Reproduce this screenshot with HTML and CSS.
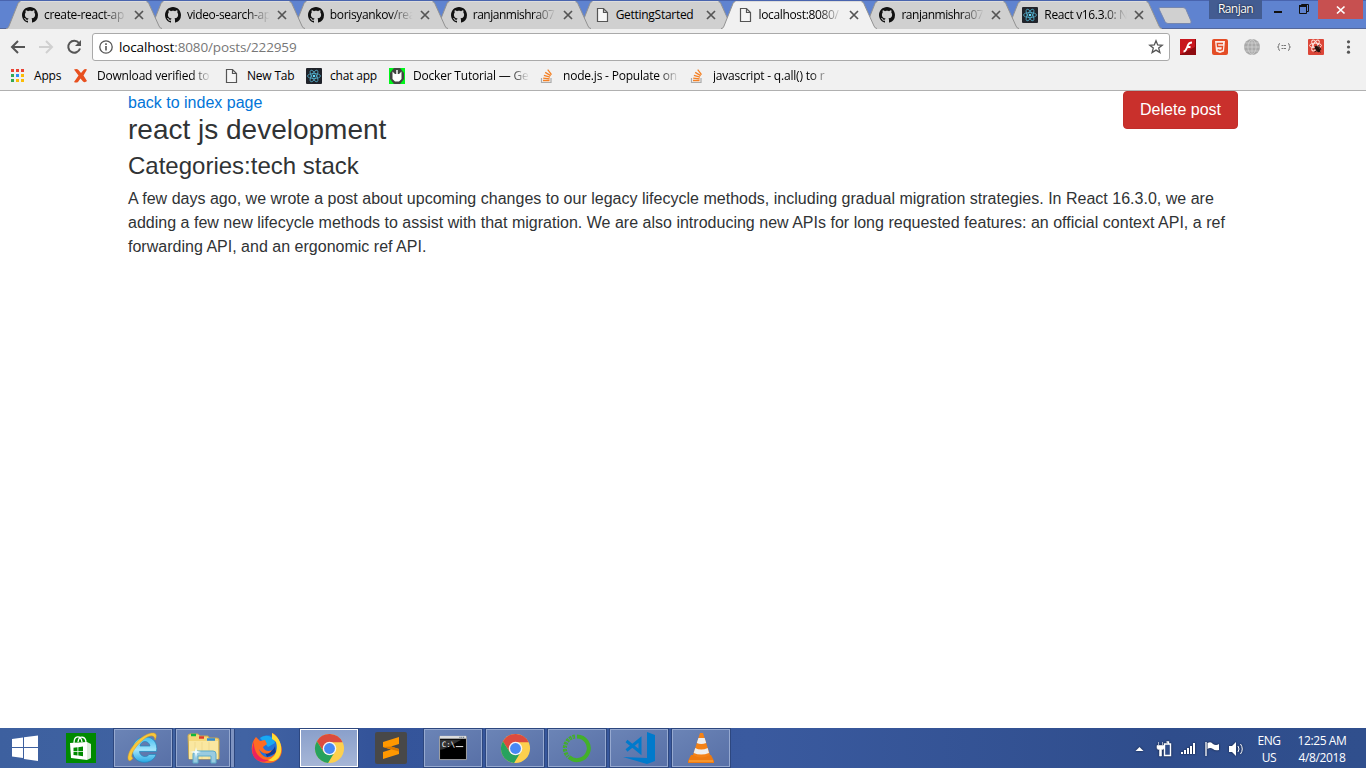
FILE: index.html
```html
<!DOCTYPE html>
<html lang="en">
<head>
<meta charset="utf-8">
<title>localhost:8080/posts/222959</title>
<link rel="stylesheet" href="styles.css">
</head>
<body>
<svg class="defs" aria-hidden="true">
  <symbol id="tab" viewBox="0 0 156 29"><path class="tab-fill" d="M0 28.5 C2 28.5 2.300 27.500 3 26 L12 3.500 Q13 1.500 14.500 1.500 H140 Q142 1.500 142.800 3.500 L153 26 Q154 28.500 156 28.500 V29 H0Z"/><path d="M0 28.500 C2 28.500 2.300 27.500 3 26 L12 3.500 Q13 1.500 14.500 1.500 H140 Q142 1.500 142.800 3.500 L153 26 Q154 28.500 156 28.500" fill="none" stroke="#929292"/><path d="M14.500 1.500H140.500" stroke="#dcdcdc"/></symbol>
  <symbol id="github" viewBox="0 0 16 16"><path fill="#111" d="M8 0C3.58 0 0 3.58 0 8c0 3.540 2.290 6.530 5.470 7.590.4.070.55-.170.55-.380 0-.190-.010-.820-.010-1.490-2.010.370-2.530-.490-2.690-.940-.090-.230-.480-.940-.820-1.130-.280-.150-.680-.520-.010-.530.630-.010 1.080.580 1.230.820.720 1.210 1.870.870 2.330.660.070-.520.280-.870.510-1.070-1.780-.2-3.640-.890-3.640-3.950 0-.870.310-1.590.820-2.150-.080-.2-.360-1.020.080-2.120 0 0 .670-.210 2.200.820.640-.180 1.320-.270 2-.270s1.360.090 2 .270c1.530-1.040 2.200-.820 2.200-.820.440 1.100.160 1.920.080 2.120.510.560.820 1.270.820 2.150 0 3.070-1.870 3.750-3.650 3.950.290.250.540.730.540 1.480 0 1.070-.010 1.930-.010 2.200 0 .210.150.460.550.380A8.010 8.010 0 0 0 16 8c0-4.420-3.580-8-8-8z"/></symbol>
  <symbol id="page" viewBox="0 0 16 16"><path d="M3.500 1.500H9.500L13.500 5.500V14.500H3.500Z M9.500 1.500V5.500H13.500" fill="#f6f6f6" stroke="#555" stroke-width="1.200"/></symbol>
  <symbol id="react" viewBox="0 0 16 16"><rect width="16" height="16" rx="1" fill="#20232a"/><g fill="none" stroke="#52aecb" stroke-width=".8"><ellipse cx="8" cy="8" rx="6.500" ry="2.500"/><ellipse cx="8" cy="8" rx="6.500" ry="2.500" transform="rotate(60 8 8)"/><ellipse cx="8" cy="8" rx="6.500" ry="2.500" transform="rotate(120 8 8)"/></g><circle cx="8" cy="8" r="1.300" fill="#61dafb"/></symbol>
  <symbol id="x" viewBox="0 0 10 10"><path d="M1 1L9 9M9 1L1 9" stroke="#555" stroke-width="1.700"/></symbol>
  <symbol id="so" viewBox="0 0 16 16"><path d="M2.500 10V14.500H12V10" fill="none" stroke="#aaa" stroke-width="1.200"/><g stroke="#f48024" stroke-width="1.300"><path d="M4 12.500H10.500M4.200 10.100L10.600 10.900M4.900 7.300L11 9.200M6.200 4.400L11.700 7.600M8.700 1.700L12.500 6.600"/></g></symbol>
  <symbol id="chrome" viewBox="0 0 32 32"><circle cx="16" cy="16" r="15" fill="#fdd04e"/><path d="M3 8.500A15 15 0 0 1 29.500 9.500H16L10 19.500Z" fill="#dc4b3e"/><path d="M3 8.500A15 15 0 0 0 14.500 31L21.600 19.300 16 22.500 10.300 20Z" fill="#27a25e"/><circle cx="16" cy="16" r="7" fill="#f5f5f5"/><circle cx="16" cy="16" r="5.600" fill="#4688f4"/></symbol>
</svg>

<header class="browser">
  <div class="tabstrip">
    <div class="tab"><svg class="shape"><use href="#tab"/></svg><svg class="fav"><use href="#github"/></svg><span class="title">create-react-ap</span><svg class="close"><use href="#x"/></svg></div>
    <div class="tab"><svg class="shape"><use href="#tab"/></svg><svg class="fav"><use href="#github"/></svg><span class="title">video-search-ap</span><svg class="close"><use href="#x"/></svg></div>
    <div class="tab"><svg class="shape"><use href="#tab"/></svg><svg class="fav"><use href="#github"/></svg><span class="title">borisyankov/rea</span><svg class="close"><use href="#x"/></svg></div>
    <div class="tab"><svg class="shape"><use href="#tab"/></svg><svg class="fav"><use href="#github"/></svg><span class="title tight">ranjanmishra07</span><svg class="close"><use href="#x"/></svg></div>
    <div class="tab"><svg class="shape"><use href="#tab"/></svg><svg class="fav"><use href="#page"/></svg><span class="title whole">GettingStarted</span><svg class="close"><use href="#x"/></svg></div>
    <div class="tab active"><svg class="shape"><use href="#tab"/></svg><svg class="fav"><use href="#page"/></svg><span class="title">localhost:8080/</span><svg class="close"><use href="#x"/></svg></div>
    <div class="tab"><svg class="shape"><use href="#tab"/></svg><svg class="fav"><use href="#github"/></svg><span class="title tight">ranjanmishra07</span><svg class="close"><use href="#x"/></svg></div>
    <div class="tab"><svg class="shape"><use href="#tab"/></svg><svg class="fav"><use href="#react"/></svg><span class="title">React v16.3.0: N</span><svg class="close"><use href="#x"/></svg></div>
    <svg class="newtab" viewBox="0 0 36 18"><path d="M3 .5H26Q28 .5 29 2.500L34 14Q34.500 16.500 33 16.500H11Q9 16.500 8 14.500L2 2Q1.500 .5 3 .5Z" fill="#d0d0d0" stroke="#7687b0"/></svg>
    <div class="window-buttons">
      <span class="user">Ranjan</span>
      <svg class="winctl" viewBox="0 0 56 20"><path d="M12 12H20" stroke="#111" stroke-width="2"/><path d="M37.500 5.500H44.500V13.500H37.500Z M39.500 5V4.500H46.500V11.500H45" fill="none" stroke="#111"/><path d="M37 6H45" stroke="#111" stroke-width="2"/></svg>
      <span class="winclose"><svg viewBox="0 0 10 10"><path d="M1 1.500L8.500 8.500M8.500 1.500L1 8.500" stroke="#fff" stroke-width="1.700"/></svg></span>
    </div>
  </div>

  <div class="toolbar">
    <svg class="nav" viewBox="0 0 84 28"><g fill="none" stroke-width="2"><path d="M25 14H12.500M18 8L12 14L18 20" stroke="#555"/><path d="M39 14H51.500M46 8L52 14L46 20" stroke="#d0d0d0"/><path d="M79 10A6 6 0 1 0 80 15.500" stroke="#555"/></g><path d="M81 7V13H75Z" fill="#555"/></svg>
    <div class="omnibox">
      <svg class="info" viewBox="0 0 14 14"><circle cx="7" cy="7" r="6.200" fill="none" stroke="#555" stroke-width="1.300"/><path d="M7 6V10.500M7 3.300V5" stroke="#555" stroke-width="1.600"/></svg>
      <span class="url">localhost<span class="path">:8080/posts/222959</span></span>
      <svg class="star" viewBox="0 0 16 16"><path d="M8 1.800L9.700 6L14.200 6.300L10.700 9.100L11.900 13.600L8 11.100L4.100 13.600L5.300 9.100L1.800 6.300L6.300 6Z" fill="none" stroke="#555" stroke-width="1.300"/></svg>
    </div>
    <div class="extensions">
      <svg viewBox="0 0 16 16"><path d="M0 0H16V16H0Z" fill="#8e0b10"/><path d="M0 0H15V8L1 15H0Z" fill="#c8171e"/><path d="M12 3.500C8 3.500 8 6 7 8.500S5.500 12.500 3.500 12.500M7 8H10.500" fill="none" stroke="#fff" stroke-width="1.800"/></svg>
      <svg viewBox="0 0 16 16"><rect width="16" height="16" rx="2" fill="#e44d26"/><path d="M3 2H13L12 12.500L8 14L4 12.500Z" fill="#fff" opacity=".9"/><path d="M11 4.500H5.300L5.600 7.500H10.500L10.200 10.600L8 11.300L5.700 10.600" fill="none" stroke="#e44d26" stroke-width="1.400"/></svg>
      <svg viewBox="0 0 16 16"><circle cx="8" cy="8" r="8" fill="#a9a9a9"/><path d="M0 8H16M8 0V16M1.500 4H14.500M1.500 12H14.500M8 0C2.500 4 2.500 12 8 16M8 0C13.500 4 13.500 12 8 16" fill="none" stroke="#d2d2d2" stroke-width=".8"/></svg>
      <svg viewBox="0 0 16 16"><path d="M4 4.500Q2.500 4.500 2.700 6.500Q2.800 8 1.500 8Q2.800 8 2.700 9.500Q2.500 11.500 4 11.500M12 4.500Q13.500 4.500 13.300 6.500Q13.200 8 14.500 8Q13.200 8 13.300 9.500Q13.500 11.500 12 11.500" fill="none" stroke="#777"/><path d="M5.500 6.500H10.500M5.500 9.500H10.500" stroke="#777" stroke-dasharray="2 .5"/></svg>
      <svg viewBox="0 0 16 16"><rect width="16" height="16" rx="1" fill="#dc4638"/><g fill="none" stroke="#ffe2dc" stroke-width="1"><ellipse cx="7.500" cy="6.500" rx="6" ry="2.300"/><ellipse cx="7.500" cy="6.500" rx="6" ry="2.300" transform="rotate(60 7.500 6.500)"/><ellipse cx="7.500" cy="6.500" rx="6" ry="2.300" transform="rotate(120 7.500 6.500)"/></g><ellipse cx="9.500" cy="10" rx="2" ry="3.600" transform="rotate(-35 9.500 10)" fill="#25100d"/><path d="M5.500 10L11 8M6.500 13L13 9.500M8 8L12.500 13.500M10 6L13 11" stroke="#25100d" stroke-width=".8"/></svg>
      <svg viewBox="0 0 16 16"><g fill="#555"><circle cx="8.500" cy="2.800" r="1.600"/><circle cx="8.500" cy="8" r="1.600"/><circle cx="8.500" cy="13.200" r="1.600"/></g></svg>
    </div>
  </div>

  <nav class="bookmarks">
    <svg class="bm b1" viewBox="0 0 16 16"><path d="M1 1H4V4H1Z M6 1H9V4H6Z M11 1H14V4H11Z" fill="#ea4335"/><path d="M1 6H4V9H1Z M1 11H4V14H1Z" fill="#34a853"/><path d="M6 6H9V9H6Z" fill="#2e8df7"/><path d="M11 6H14V9H11Z M6 11H9V14H6Z M11 11H14V14H11Z" fill="#fbbc05"/></svg><span class="l1">Apps</span>
    <svg class="bm b2" viewBox="0 0 16 16"><path d="M1 1.500Q4 .5 5.500 2L8 5L10.500 2Q12 .5 14 1.500L10.500 7.500L14 13Q12 15 10 13.500L7.500 10.500L5 14Q3 15 1 14L5.500 7.500Z" fill="#e8501f"/></svg><span class="l2 fade">Download verified to</span>
    <svg class="bm b3"><use href="#page"/></svg><span class="l3">New Tab</span>
    <svg class="bm b4"><use href="#react"/></svg><span class="l4">chat app</span>
    <svg class="bm b5" viewBox="0 0 16 16"><path d="M0 0H16V16H0Z" fill="#00f51a"/><path d="M5 0H11L15 5V11L11 16H5L1 11V5Z" fill="#414541"/><path d="M3.500 3.500L6 6H10L12.500 3.500V11L10 13.500H6L3.500 11Z" fill="#fff"/><path d="M8 2V8" stroke="#fff" stroke-width="1.500"/></svg><span class="l5 fade">Docker Tutorial — Ge</span>
    <svg class="bm b6"><use href="#so"/></svg><span class="l6 fade">node.js - Populate on</span>
    <svg class="bm b7"><use href="#so"/></svg><span class="l7 fade">javascript - q.all() to r</span>
  </nav>
</header>

<main class="container">
  <button class="delete">Delete post</button>
  <a class="back" href="#">back to index page</a>
  <h3>react js development</h3>
  <h4>Categories:tech stack</h4>
  <p>A few days ago, we wrote a post about upcoming changes to our legacy lifecycle methods, including gradual migration strategies. In React 16.3.0, we are adding a few new lifecycle methods to assist with that migration. We are also introducing new APIs for long requested features: an official context API, a ref forwarding API, and an ergonomic ref API.</p>
</main>

<footer class="taskbar">
  <div class="slot start"><svg width="28" height="28" viewBox="0 0 28 28"><path d="M1 5L12 3.500V13H1Z M13 3.300L27 1.500V13H13Z M1 14H12V24L1 22.500Z M13 14H27V27L13 25Z" fill="#fff"/></svg></div>
  <div class="slot"><svg width="30" height="30" viewBox="0 0 30 30"><path d="M0 0H30V30H0Z" fill="#008a00"/><path d="M4 10L21 9V27L5 25Z" fill="#fff"/><path d="M21 9L25 11V25L21 27Z" fill="#dcebdc"/><path d="M8 10C8 2 15 2 16 9M12 9C13 2 20 3 20 10" fill="none" stroke="#fff" stroke-width="1.300"/><path d="M7.500 14.800L11.500 14.300V18H7.500Z M12.300 14.200L17 13.600V18H12.300Z M7.500 18.800H11.500V22.500L7.500 22Z M12.300 18.800H17V23.300L12.300 22.600Z" fill="#008a00"/></svg></div>
  <div class="slot open"><svg width="32" height="32" viewBox="0 0 32 32"><defs><linearGradient id="ie" x2="0" y2="1"><stop stop-color="#42bdf0"/><stop offset=".5" stop-color="#a2e4fb"/><stop offset="1" stop-color="#29a8e3"/></linearGradient></defs><path d="M29.500 19.500H12.500C13 25 20 26 22 22.500H29C26 32 12 33 7 25C2 15 9 4 19 5C26 5 31 11 29.500 19.500ZM13 14H23C22 8 14 8 13 14Z" fill="url(#ie)" stroke="#2086bd" stroke-width=".7"/><path d="M6 26C3 31-1 29 2 21C6 11 19 0 27 1Q31 2 28 8C28 3 23 2 16 8C8 14 2 25 6 26Z" fill="#f9c83b" stroke="#d89c1f" stroke-width=".5"/></svg></div>
  <div class="slot open stacked"><svg width="34" height="32" viewBox="0 0 34 32"><path d="M2 4Q2 2 4 2H12L14 4H22L23 6H31Q33 6 33 8V27H3Z" fill="#f4d779" stroke="#c9a84e"/><path d="M3 9H32V27H3Z" fill="#fae7a0"/><path d="M5 3H10" stroke="#10b83c" stroke-width="2.500"/><path d="M13 5.500H18" stroke="#dc3a2c" stroke-width="2.500"/><path d="M21 7.500H29" stroke="#328bd2" stroke-width="2.500"/><path d="M9 10V27M16 10V27M23 10V27" stroke="#f0d98f"/><path d="M7 31V22Q7 19 11 19H27Q30 19 30 22V31H25V24H12V31Z" fill="#99cbe0" stroke="#5dabc9"/><path d="M10 15L11 19L15 20L11 21L10 26L9 21L4 20L9 19Z" fill="#effcff"/></svg></div>
  <div class="slot"><svg width="32" height="32" viewBox="0 0 32 32"><circle cx="17" cy="15" r="12" fill="#2272d9"/><path d="M9 6C16 1 23 5 24 11L17 15Z" fill="#18a9f2"/><path d="M13 18C18 22 23 18 24 14L25 21L16 25Z" fill="#173a91"/><path d="M5 5L9 9L14 8L16 12L12 15C13 19 18 20 21 18C18 24 11 22 8 17C12 31 28 26 26 12Q25 8 21 5L21 1C25 2 27 6 28 9C36 22 26 32 16 31C0 31-3 14 5 5Z" fill="#ff6b22"/><path d="M21 1C29 6 31 13 30 20C28 30 20 30 17 28C28 24 26 13 25 10Q23 8 21 7Z" fill="#ffdc35"/><path d="M3 9C2 23 12 29 18 28C10 33-2 27 2 13Z" fill="#ed235c"/></svg></div>
  <div class="slot open current"><svg width="31" height="31" viewBox="0 0 31 31"><use href="#chrome" width="31" height="31"/></svg></div>
  <div class="slot"><svg width="32" height="32" viewBox="0 0 32 32"><rect width="32" height="32" rx="2" fill="#484848"/><path d="M8 10L24 5V12L16 14.500L24 17V22L8 27V20L16 17.500L8 15Z" fill="#ff9800"/><path d="M8 15L24 19.500V17L16 14.500Z" fill="#d97900"/></svg></div>
  <div class="slot open"><svg width="30" height="26" viewBox="0 0 32 28"><path d="M1.500 1.500H30.500V26.500H1.500Z" fill="#000" stroke="#aaa"/><path d="M2 1H30V4H2Z" fill="#ddd"/><path d="M2 5H25C16 9 12 14 2 16Z" fill="#333"/><path d="M23 2.500H29" stroke="#567" stroke-width="1.500" stroke-dasharray="1 1"/><text x="4" y="13" class="prompt">C:\</text><path d="M19 12.500H27" stroke="#fff"/></svg></div>
  <div class="slot open"><svg width="31" height="31" viewBox="0 0 31 31"><use href="#chrome" width="31" height="31"/></svg></div>
  <div class="slot open"><svg width="30" height="30" viewBox="0 0 30 30"><path d="M15 3.500A11.800 11.800 0 1 1 7 24" fill="none" stroke="#43b02a" stroke-width="4"/><path d="M13 3.500A12 12 0 0 0 6 23.500" fill="none" stroke="#43b02a" stroke-width="4" stroke-dasharray="2.500 1"/><path d="M12 4A12 12 0 0 0 6 23" fill="none" stroke="#6078ae" stroke-dasharray="1.500 2"/></svg></div>
  <div class="slot open"><svg width="34" height="32" viewBox="0 0 34 32"><path d="M25 0L33 3V29L25 32L1 25L25 26Z" fill="#007acc"/><path d="M4.500 9L18 20V7.500L4.500 18.500" fill="none" stroke="#007acc" stroke-width="3"/></svg></div>
  <div class="slot open"><svg width="28" height="32" viewBox="0 0 28 32"><path d="M4 23H24L27 29V31H1V29Z" fill="#ed7a11"/><path d="M2 29H26" stroke="#ffb14a"/><path d="M13 1H16L23 23Q14 28 6 23Z" fill="#f58216"/><path d="M11.400 6H17.700L19.200 11Q14 13 9.800 11Z M8.200 16Q14 19 20.700 16L22 21Q14 24 6.700 21Z" fill="#eee"/></svg></div>
  <div class="tray">
    <svg width="116" height="24" viewBox="0 0 116 24"><g class="tray-glyphs"><path d="M4.500 14L8.500 10L12.500 14Z" fill="#fff"/><path d="M27.500 5V8M31.500 5V8M26 8.500H33V11Q33 12.500 30.500 12.500V19H28.500V12.500Q26 12.500 26 11Z" fill="#fff" stroke="#fff" stroke-width=".6"/><path d="M33.500 7H39.500V18.500H33.500Z M35.500 5H37.500V7" fill="#2f4c88" stroke="#fff" stroke-width="1.400"/><path d="M50 15H52V17H50Z M53 13H55V17H53Z M56 11H58V17H56Z M59 9H61V17H59Z M62 6H64V17H62Z" fill="#fff"/><path d="M75 5V19" stroke="#fff" stroke-width="1.300"/><path d="M76.500 6Q80 4 82 7Q85 9 88 7V13Q84 14 82 12Q79 10 76.500 12Z" fill="#fff"/><path d="M98 9H101L105 5V19L101 15H98Z" fill="#fff"/><path d="M107 9Q109 12 107 15M109.500 7Q113 12 109.500 17" fill="none" stroke="#fff"/></g></svg>
    <div class="lang"><span>ENG</span><span>US</span></div>
    <div class="clock"><span>12:25 AM</span><span>4/8/2018</span></div>
  </div>
</footer>
</body>
</html>
```
FILE: styles.css
```css
* { box-sizing: border-box; }
body { margin: 0; width: 1366px; height: 768px; display: flex; flex-direction: column; background: #fff; overflow: hidden; font-family: "Liberation Sans", Arial, sans-serif; font-size: 16px; line-height: 1.5; color: #303335; }
svg { display: block; flex: none; }
.defs { position: absolute; width: 0; height: 0; }

.browser { height: 91px; background: #f1f1f1; border-bottom: 1px solid #b0b0b0; font-family: "Open Sans", "Noto Sans", sans-serif; font-size: 12px; color: #000; }
.tabstrip { height: 29px; display: flex; padding-left: 6px; background: #5f83d0; border-top: 1px solid #4964ae; box-shadow: inset 0 -1px #53679a; }
.tab { position: relative; z-index: 1; width: 156px; height: 29px; margin: -1px -13.100px 0 0; padding: 1px 0 0 16px; display: flex; align-items: center; flex: none; }
.tab:nth-child(1) { z-index: 8; }
.tab:nth-child(2) { z-index: 7; }
.tab:nth-child(3) { z-index: 6; }
.tab:nth-child(4) { z-index: 5; }
.tab:nth-child(5) { z-index: 4; }
.tab:nth-child(7) { z-index: 3; }
.tab:nth-child(8) { z-index: 2; }
.tab.active { z-index: 9; }
.shape { position: absolute; left: 0; top: 0; width: 156px; height: 29px; z-index: -1; fill: #d0d0d0; }
.active .shape { fill: #f1f1f1; }
.active::after { content: ""; position: absolute; left: 3px; right: 3px; bottom: 0; height: 1px; background: #f1f1f1; }
.fav { width: 16px; height: 16px; }
.title { width: 90px; margin-left: 6px; white-space: nowrap; line-height: 16px; letter-spacing: -.35px; -webkit-mask-image: linear-gradient(90deg, #000 66%, transparent 92%); mask-image: linear-gradient(90deg, #000 66%, transparent 92%); }
.title.tight { letter-spacing: -.48px; }
.title.whole { letter-spacing: -.28px; -webkit-mask-image: none; mask-image: none; }
.close { width: 10px; height: 10px; }
.newtab { width: 36px; height: 18px; margin: 6px 0 0 8px; position: relative; z-index: 1; }
.window-buttons { display: flex; margin-left: auto; height: 19px; margin-top: -1px; }
.user { width: 53px; height: 19px; line-height: 18px; text-align: center; background: #435c91; color: #fff; text-shadow: 0 0 2px #000; letter-spacing: -.55px; }
.winctl { width: 56px; height: 20px; }
.winclose { width: 45px; height: 19px; margin-right: 3px; background: #c75050; display: flex; align-items: center; justify-content: center; }
.winclose svg { width: 10px; height: 10px; }

.toolbar { height: 36px; display: flex; align-items: center; }
.nav { width: 84px; height: 28px; }
.omnibox { width: 1078px; height: 28px; margin-left: 8px; border: 1px solid #aaa; border-radius: 3px; background: #fff; display: flex; align-items: center; padding: 0 5px 0 6px; }
.info { width: 14px; height: 14px; margin-right: 6px; }
.url { font-size: 13.500px; line-height: 20px; letter-spacing: -.14px; }
.path { color: #777; }
.star { width: 16px; height: 16px; margin-left: auto; }
.extensions { display: flex; gap: 16px; margin-left: 10px; }
.extensions svg { width: 16px; height: 16px; }

.bookmarks { height: 22px; display: flex; align-items: center; padding-left: 10px; letter-spacing: -.2px; }
.bookmarks span { white-space: nowrap; line-height: 18px; flex: none; }
.bm { width: 16px; height: 16px; }
.l1 { width: 40px; margin-left: 8px; }
.l2 { width: 118px; margin-left: 8px; }
.l3 { width: 52px; margin-left: 8px; }
.l4 { width: 51px; margin-left: 8px; }
.l5 { width: 120px; margin-left: 8px; }
.l6 { width: 120px; margin-left: 8px; }
.l7 { width: 122px; margin-left: 8px; }
.b2 { margin-left: -1px; }
.b3 { margin-left: 8px; }
.b4 { margin-left: 7px; }
.b5 { margin-left: 8px; }
.b6 { margin-left: 6px; }
.b7 { margin-left: 6px; }
.fade { -webkit-mask-image: linear-gradient(90deg, #000 80%, transparent 97%); mask-image: linear-gradient(90deg, #000 80%, transparent 97%); }

.container { width: 1140px; margin: 0 auto; padding: 0 15px; flex: 1; }
.delete { float: right; border: 1px solid #c12e2a; border-radius: 4px; background: #c9302c; color: #fff; font: 16px/20px "Liberation Sans", Arial, sans-serif; padding: 8px 16px; }
.back { color: #0275d8; text-decoration: none; display: inline-block; vertical-align: top; }
h3, h4 { margin: 0 0 8px; font-weight: 400; line-height: 1.1; }
h3 { font-size: 28px; margin-bottom: 7px; }
h4 { font-size: 24px; }
p { margin: 0 0 16px; letter-spacing: .011px; }

.taskbar { height: 40px; display: flex; background: linear-gradient(90deg, #3d609f 0, #4163a3 18%, #34549a 27%, #3a5a9f 55%, #2f4d8c 85%, #304f8d 100%); font-family: "Open Sans", "Noto Sans", sans-serif; }
.slot { width: 62px; height: 40px; display: flex; align-items: center; justify-content: center; flex: none; }
.slot.start { width: 50px; }
.slot.open { width: 58px; height: 38px; margin: 1px 2px; background: linear-gradient(150deg, #6b84b6, #5870a7); border: 1px solid #96a9d0; box-shadow: 0 0 0 1px #2d477f; }
.slot.current { background: linear-gradient(#8aa0cb, #a6b6d7); border: 1px solid #fff; }
.slot.stacked { width: 54px; margin-right: 6px; box-shadow: 0 0 0 1px #2d477f, 4px 0 0 0 #7e93c1, 5px 0 0 0 #2d477f; }
.prompt { font: 8px "DejaVu Sans Mono", monospace; fill: #fff; }
.tray { margin-left: auto; display: flex; align-items: center; color: #fff; font-size: 12px; line-height: 17px; letter-spacing: -.4px; padding-right: 18px; }
.tray svg { margin-top: 2px; }
.tray-glyphs { filter: drop-shadow(0 0 1px #101c36); }
.lang, .clock { display: flex; flex-direction: column; text-align: center; margin-top: 2px; }
.lang { width: 30px; margin-left: 7px; }
.clock { width: 52px; margin-left: 12px; white-space: nowrap; align-items: center; }
```
